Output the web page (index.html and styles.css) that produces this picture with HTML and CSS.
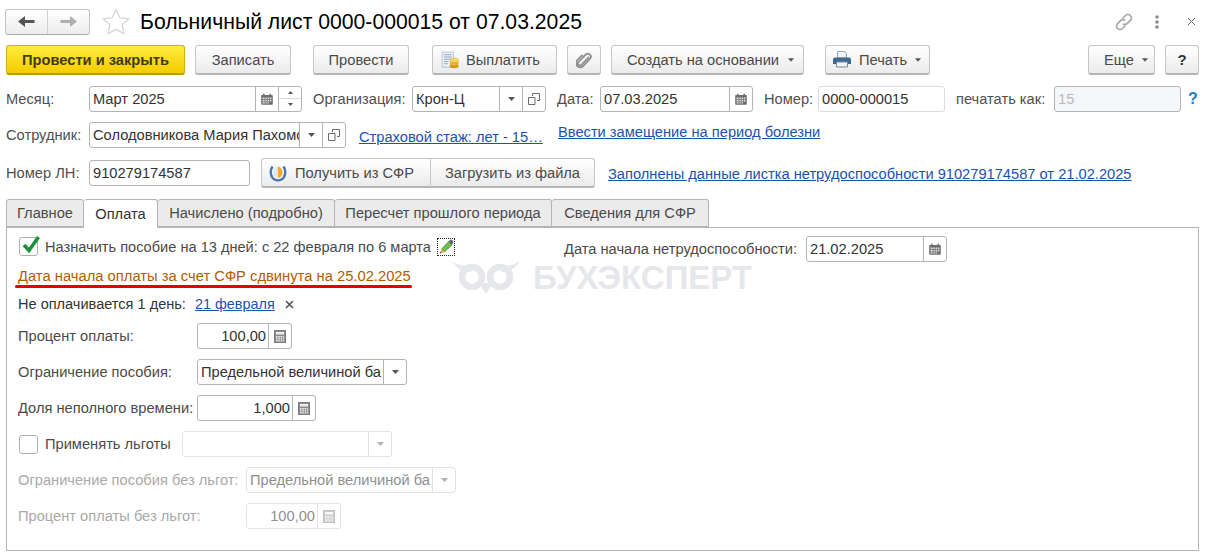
FILE: index.html
```html
<!DOCTYPE html>
<html lang="ru">
<head>
<meta charset="utf-8">
<title>Больничный лист</title>
<link rel="stylesheet" href="styles.css">
</head>
<body>
<svg class="sprite" width="0" height="0" aria-hidden="true">
  <symbol id="cal" viewBox="0 0 12 12"><path fill="#6e6e6e" d="M1 2h1V.8h1.5V2h5V.8H10V2h1a.8.8 0 0 1 .8.8v8.2a.8.8 0 0 1-.8.8H1a.8.8 0 0 1-.8-.8V2.800A.8.8 0 0 1 1 2z"/><path fill="#e4e4e4" d="M1.600 4.600h2v1.600h-2zM4.400 4.600h1.400v1.600H4.400zM6.600 4.600H8v1.600H6.600zM8.800 4.600h1.600v1.600H8.800zM1.600 7h2v1.400h-2zM4.400 7h1.400v1.400H4.400zM6.600 7H8v1.400H6.600zM8.800 7h1.600v1.400H8.800zM1.600 9.200h2v1.400h-2zM4.400 9.200h1.400v1.400H4.400zM6.600 9.200H8v1.400H6.600z"/></symbol>
  <symbol id="calc" viewBox="0 0 12 13"><rect x=".5" y=".5" width="11" height="12" fill="#8c8c8c" stroke="#7a7a7a"/><path fill="#efefef" d="M2 2h8v2.400H2zM2 6h1.600v1.400H2zM4.300 6h1.600v1.400H4.300zM6.600 6h1.600v1.400H6.600zM8.900 6H10v1.400H8.900zM2 8.200h1.600v1.400H2zM4.300 8.200h1.600v1.400H4.300zM6.600 8.200h1.600v1.400H6.600zM8.900 8.200H10v1.400H8.900zM2 10.200h1.600v1.200H2zM4.300 10.200h1.600v1.200H4.300zM6.600 10.200h1.600v1.200H6.600zM8.900 10.200H10v1.200H8.900z"/></symbol>
  <symbol id="copy" viewBox="0 0 12 12"><path fill="none" stroke="#6b6b6b" d="M4.500 3V.5h7v7H9M.5 4.500h6.500v7H.5z"/></symbol>
  <symbol id="tri" viewBox="0 0 7 4"><path fill="#555" d="M0 0h7L3.500 4z"/></symbol>
</svg>
<main class="window">
  <header class="head">
    <div class="nav">
      <span class="nav-btn"><svg width="17" height="13" viewBox="0 0 17 13"><path fill="#555" d="M0 6.500 7 1v4h9.500v3H7v4z"/></svg></span>
      <span class="nav-btn"><svg width="17" height="13" viewBox="0 0 17 13"><path fill="#b0b0b0" d="M17 6.500 10 1v4H.5v3H10v4z"/></svg></span>
    </div>
    <svg class="star" width="28" height="27" viewBox="0 0 28 27"><path fill="#fff" stroke="#d2d4d6" stroke-width="1.200" d="M14 1.500l3.800 8.300 9 1-6.700 6.100 1.900 8.900L14 21.300l-8 4.500 1.900-8.900L1.200 10.800l9-1z"/></svg>
    <h1 class="title">Больничный лист 0000-000015 от 07.03.2025</h1>
    <div class="head-tools">
      <svg width="20" height="20" viewBox="0 0 20 20"><g fill="none" stroke="#a8a8a8" stroke-width="1.700"><path d="M8.500 6.500l3-3a3.400 3.400 0 0 1 4.900 4.900l-3 3a3.400 3.400 0 0 1-4.400.3"/><path d="M11.500 13.500l-3 3a3.400 3.400 0 0 1-4.900-4.900l3-3a3.400 3.400 0 0 1 4.400-.3"/></g></svg>
      <svg class="kebab" width="4" height="14" viewBox="0 0 4 14"><g fill="#8c8c8c"><circle cx="2" cy="2" r="1.800"/><circle cx="2" cy="7" r="1.800"/><circle cx="2" cy="12" r="1.800"/></g></svg>
      <svg class="close" width="9" height="9" viewBox="0 0 9 9"><path stroke="#666" stroke-width="1" d="M1 1l7 7M8 1L1 8"/></svg>
    </div>
  </header>

  <div class="toolbar">
    <button class="btn btn-primary w-post-close">Провести и закрыть</button>
    <button class="btn w-save">Записать</button>
    <button class="btn w-post">Провести</button>
    <button class="btn w-pay">
      <svg width="18" height="18" viewBox="0 0 24 24"><path fill="#eef3f9" stroke="#a4b2c4" d="M1.500 1.500h15v20h-15z"/><path stroke="#8aa4c2" stroke-width="1.300" d="M4 5h10M4 8h10M4 11h10M4 14h6M4 17h5"/><ellipse cx="17.500" cy="20" rx="6" ry="3" fill="#d29a18"/><ellipse cx="17.500" cy="16.500" rx="6" ry="3" fill="#e6b52e"/><ellipse cx="18" cy="12.500" rx="5.500" ry="3" fill="#f7d65e" stroke="#c9981c" stroke-width=".6"/></svg>
      Выплатить</button>
    <button class="btn w-clip" aria-label="Файлы"><svg width="16" height="18" viewBox="0 0 16 18"><path fill="none" stroke="#8f8f8f" stroke-width="1.800" d="M13.500 5.500 6 13.500a2 2 0 0 1-3-2.800L10.500 3a3 3 0 0 1 4.200 4.200L7.500 15a4.200 4.200 0 0 1-6-5.800L7 3.500" transform="translate(-.5 .3)"/></svg></button>
    <button class="btn w-create">Создать на основании<svg class="tri-b tri-near" width="6" height="4"><use href="#tri"/></svg></button>
    <button class="btn w-print">
      <svg width="18" height="17" viewBox="0 0 18 17"><path fill="#f2f5f8" stroke="#9aa4ae" d="M4.500.5h7l2 2.500v4h-9z"/><path fill="#3f6a90" d="M2 6.500h14a2 2 0 0 1 2 2V13h-3v-1.500H3V13H0V8.500a2 2 0 0 1 2-2z"/><path fill="#f2f5f8" stroke="#7a8a99" d="M3.500 11h11v5h-11z"/></svg>
      Печать<svg class="tri-b" width="6" height="4"><use href="#tri"/></svg></button>
    <button class="btn w-more">Еще<svg class="tri-b" width="6" height="4"><use href="#tri"/></svg></button>
    <button class="btn btn-help w-help">?</button>
  </div>

  <div class="row row-1">
    <label class="lbl l-month">Месяц:</label>
    <div class="field f-month"><span class="val">Март 2025</span><span class="addon a-cal"><svg width="12" height="12"><use href="#cal"/></svg></span><span class="spin"><svg width="5" height="3" viewBox="0 0 7 4"><path fill="#555" d="M0 4h7L3.500 0z"/></svg><svg width="5" height="3" viewBox="0 0 7 4"><path fill="#555" d="M0 0h7L3.500 4z"/></svg></span></div>
    <label class="lbl l-org">Организация:</label>
    <div class="field f-org"><span class="val">Крон-Ц</span><span class="addon a-drop"><svg width="7" height="4"><use href="#tri"/></svg></span><span class="addon a-copy"><svg width="12" height="12"><use href="#copy"/></svg></span></div>
    <label class="lbl l-date">Дата:</label>
    <div class="field f-date"><span class="val">07.03.2025</span><span class="addon a-cal"><svg width="12" height="12"><use href="#cal"/></svg></span></div>
    <label class="lbl l-num">Номер:</label>
    <div class="field field-light f-num"><span class="val">0000-000015</span></div>
    <label class="lbl l-print">печатать как:</label>
    <div class="field field-off f-printas"><span class="val">15</span></div>
    <span class="hint">?</span>
  </div>

  <div class="row row-2">
    <label class="lbl l-month">Сотрудник:</label>
    <div class="field f-emp"><span class="val">Солодовникова Мария Пахомовна</span><span class="addon a-drop"><svg width="7" height="4"><use href="#tri"/></svg></span><span class="addon a-copy"><svg width="12" height="12"><use href="#copy"/></svg></span></div>
    <a class="link link-stazh">Страховой стаж: лет - 15…</a>
    <a class="link link-subst">Ввести замещение на период болезни</a>
  </div>

  <div class="row row-3">
    <label class="lbl l-month">Номер ЛН:</label>
    <div class="field f-ln"><span class="val">910279174587</span></div>
    <div class="group">
      <button class="btn g-sfr"><svg width="18" height="18" viewBox="0 0 18 18"><path fill="none" stroke="#4f74ad" stroke-width="2.400" d="M3.500 2.500C.8 6.500 1.200 13 5.500 15.500c2.500 1.300 4.500 1.300 7 0 4.300-2.500 4.700-9 2-13"/><path fill="#dfe5ee" d="M9 2.500C6.500 3 4.500 5.500 4.500 8.500s2 5 4.500 5.500z"/><path fill="#f0a92a" d="M9 2.500c2.500.5 4.500 3 4.500 6s-2 5-4.500 5.500z"/></svg>Получить из СФР</button>
      <button class="btn g-file">Загрузить из файла</button>
    </div>
    <a class="link link-filled">Заполнены данные листка нетрудоспособности 910279174587 от 21.02.2025</a>
  </div>

  <nav class="tabs">
    <span class="tab t-1">Главное</span>
    <span class="tab tab-on t-2">Оплата</span>
    <span class="tab t-3">Начислено (подробно)</span>
    <span class="tab t-4">Пересчет прошлого периода</span>
    <span class="tab t-5">Сведения для СФР</span>
  </nav>

  <section class="panel">
    <div class="watermark">
      <svg width="68" height="33" viewBox="0 0 68 33"><g fill="none" stroke="#e6e7eb" stroke-width="6.500"><circle cx="20" cy="16" r="10"/><circle cx="48" cy="16" r="10"/></g><path fill="#e6e7eb" d="M0 0c6 5 14 5 22 5l-4 6C10 11 4 7 0 0zM68 0c-6 5-14 5-22 5l4 6c8 0 14-4 18-11zM27 22h14l-7 11z"/></svg>
      <span class="wm-text">БУХЭКСПЕРТ</span>
    </div>
    <div class="red-line"></div>

    <div class="p-top">
      <span class="check check-top"><svg class="tick" width="22" height="22" viewBox="0 0 22 22"><path fill="none" stroke="#17913a" stroke-width="3.600" d="M3 10l5 5.500L17.500 2"/></svg></span>
      <span class="txt txt-assign">Назначить пособие на 13 дней: с 22 февраля по 6 марта</span>
      <span class="pencil"><svg width="16" height="16" viewBox="0 0 16 16"><path fill="#6fbf4a" stroke="#3f8a2a" stroke-width=".6" d="M3.500 10 10.500 2.500l3.500 3.500-7.500 7z"/><path fill="#5a6a78" d="M10.500 2.500 12 1a1.500 1.500 0 0 1 2 0l1 1a1.500 1.500 0 0 1 0 2l-1 2z"/><path fill="#eda33a" d="M3.500 10l3 3-4.500 1.500z"/><path fill="#333" d="M2.700 12.800l.9.900-1.600.8z"/></svg></span>
      <span class="txt txt-start">Дата начала нетрудоспособности:</span>
      <div class="field f-start"><span class="val">21.02.2025</span><span class="addon a-cal"><svg width="12" height="12"><use href="#cal"/></svg></span></div>
    </div>

    <p class="warn">Дата начала оплаты за счет СФР сдвинута на 25.02.2025</p>

    <div class="p-unpaid">
      <span class="txt txt-dark">Не оплачивается 1 день:</span>
      <a class="link link-day">21 февраля</a>
      <svg class="x" width="9" height="9" viewBox="0 0 9 9"><path stroke="#555" stroke-width="1.600" d="M1 1l7 7M8 1L1 8"/></svg>
    </div>

    <div class="p-row">
      <label class="plbl w-178">Процент оплаты:</label>
      <div class="field f-pct"><span class="val val-r">100,00</span><span class="addon a-calc"><svg width="12" height="13"><use href="#calc"/></svg></span></div>
    </div>
    <div class="p-row">
      <label class="plbl w-178">Ограничение пособия:</label>
      <div class="field f-limit"><span class="val">Предельной величиной ба</span><span class="addon a-drop"><svg width="7" height="4"><use href="#tri"/></svg></span></div>
    </div>
    <div class="p-row">
      <label class="plbl w-178">Доля неполного времени:</label>
      <div class="field f-share"><span class="val val-r">1,000</span><span class="addon a-calc"><svg width="12" height="13"><use href="#calc"/></svg></span></div>
    </div>
    <div class="p-row">
      <span class="check check-off"></span>
      <label class="plbl w-137">Применять льготы</label>
      <div class="field field-dis f-limit"><span class="val"></span><span class="addon a-drop"><svg class="faint" width="7" height="4"><use href="#tri"/></svg></span></div>
    </div>
    <div class="p-row">
      <label class="plbl plbl-off w-227">Ограничение пособия без льгот:</label>
      <div class="field field-dis f-limit"><span class="val">Предельной величиной ба</span><span class="addon a-drop"><svg class="faint" width="7" height="4"><use href="#tri"/></svg></span></div>
    </div>
    <div class="p-row">
      <label class="plbl plbl-off w-227">Процент оплаты без льгот:</label>
      <div class="field field-dis f-pct"><span class="val val-r">100,00</span><span class="addon a-calc"><svg class="faint" width="12" height="13"><use href="#calc"/></svg></span></div>
    </div>
  </section>
</main>
</body>
</html>
```

FILE: styles.css
```css
* { box-sizing: border-box; }
html, body { margin: 0; padding: 0; background: #fff; }
body { width: 1205px; height: 555px; overflow: hidden; font: 14.67px "Liberation Sans", Arial, sans-serif; color: #4a4a4a; }
.sprite { position: absolute; }
.window { display: flex; flex-direction: column; height: 555px; }

/* header */
.head { display: flex; align-items: center; height: 27px; margin: 8px 0 0 5px; }
.nav { display: flex; width: 85px; height: 26px; border: 1px solid #c4c4c4; border-bottom-color: #aaa; border-radius: 3px; background: linear-gradient(#fff, #ececec); }
.nav-btn { flex: 1; display: flex; align-items: center; justify-content: center; }
.nav-btn + .nav-btn { border-left: 1px solid #d0d0d0; }
.star { margin-left: 12px; }
.title { margin: 0 0 0 10px; font-size: 21.2px; font-weight: 400; color: #000; white-space: nowrap; }
.head-tools { display: flex; align-items: center; margin-left: auto; padding-right: 9px; }
.kebab { margin-left: 21px; }
.close { margin-left: 28px; }

/* buttons */
.btn { display: inline-flex; align-items: center; justify-content: center; height: 30px; padding: 0; border: 1px solid #c6c6c6; border-bottom: 2px solid #b4b4b4; border-radius: 3px; background: linear-gradient(#fff, #ebebeb); font: 14.67px "Liberation Sans", Arial, sans-serif; color: #4a4a4a; white-space: nowrap; }
.toolbar { display: flex; margin: 10px 0 0 6px; height: 30px; }
.btn-primary { background: linear-gradient(#ffec3d, #f5cc00); border-color: #d0ae16; border-bottom-color: #b99b10; font-weight: 700; color: #3f3a1a; }
.w-post-close { width: 179px; }
.w-save { width: 96px; margin-left: 10px; }
.w-post { width: 96px; margin-left: 22px; }
.w-pay { width: 125px; margin-left: 23px; justify-content: flex-start; padding-left: 8px; gap: 7px; }
.w-clip { width: 34px; margin-left: 10px; }
.w-create { width: 193px; margin-left: 10px; justify-content: flex-start; padding-left: 15px; }
.w-print { width: 105px; margin-left: 21px; justify-content: flex-start; padding-left: 7px; gap: 8px; }
.w-more { width: 67px; margin-left: auto; justify-content: flex-start; padding-left: 15px; }
.w-help { width: 34px; margin: 0 6px 0 10px; }
.btn-help { font-weight: 700; font-size: 15px; color: #333; }
.w-print .tri-b { margin-left: 0; }
.tri-b { margin-left: 8px; }
.tri-near { margin-left: 9px; }

/* rows */
.row { display: flex; align-items: center; height: 26px; margin-left: 6px; }
.row-1 { margin-top: 11px; }
.row-2 { margin-top: 10px; }
.row-3 { margin-top: 12px; }
.lbl { white-space: nowrap; color: #4f4f4f; }
.l-month { width: 83px; }
.l-org { width: 99px; margin-left: 11px; }
.l-date { width: 43px; margin-left: 11px; }
.l-num { width: 54px; margin-left: 11px; }
.l-print { width: 98px; margin-left: 11px; }

.field { display: flex; height: 26px; border: 1px solid #b4b4b4; border-radius: 3px; background: #fff; color: #333; overflow: hidden; }
.field-light { border-color: #dcdcdc; }
.field-off { border-color: #b4b4b4; background: #f5f6fa; color: #b9b9b9; }
.field-dis { border-color: #e2e2e2; color: #8f8f8f; }
.val { flex: 1; min-width: 0; padding: 0 3px; line-height: 24px; white-space: nowrap; overflow: hidden; }
.val-r { text-align: right; padding-right: 2px; }
.addon { display: flex; align-items: center; justify-content: center; flex: none; width: 23px; border-left: 1px solid #b4b4b4; }
.field-dis .addon { border-left-color: #e2e2e2; }
.spin { display: flex; flex: none; flex-direction: column; align-items: center; justify-content: space-between; width: 23px; height: 24px; padding: 4px 0 5px; border-left: 1px solid #b4b4b4; background: linear-gradient(transparent 11px, #d8d8d8 11px, #d8d8d8 12px, transparent 12px); }
.faint { opacity: .45; }
.f-month { width: 213px; }
.f-org { width: 134px; }
.f-date { width: 153px; }
.f-num { width: 127px; }
.f-printas { width: 127px; }
.f-emp { width: 257px; }
.f-ln { width: 161px; }
.f-start { width: 141px; margin-left: 6px; }
.hint { margin-left: 7px; font-size: 16px; font-weight: 700; color: #1a7fc4; }

.link { color: #1a52b0; text-decoration: underline; white-space: nowrap; }
.link-stazh { margin: 4px 0 0 13px; width: 183px; }
.link-subst { margin: 0 0 6px 16px; }
.link-filled { margin: 2px 0 0 13px; }
.link-day { width: 79px; font-size: 14.4px; }

.group { display: flex; margin-left: 11px; }
.g-sfr { width: 170px; border-radius: 3px 0 0 3px; justify-content: flex-start; padding-left: 7px; gap: 8px; }
.g-file { width: 165px; border-left: 1px solid #c6c6c6; margin-left: -1px; border-radius: 0 3px 3px 0; }

/* tabs */
.tabs { display: flex; margin: 13px 0 0 6px; height: 28px; position: relative; z-index: 1; }
.tab { display: flex; align-items: center; justify-content: center; height: 28px; border: 1px solid #b4b4b4; border-left-width: 0; border-radius: 3px 3px 0 0; background: #ebebeb; white-space: nowrap; }
.t-1 { border-left-width: 1px; }
.tab-on { height: 29px; background: #fff; border-bottom: 0; color: #333; }
.t-1 { width: 78px; }
.t-2 { width: 74px; }
.t-3 { width: 177px; }
.t-4 { width: 217px; }
.t-5 { width: 157px; }

/* panel */
.panel { position: relative; width: 1193px; height: 324px; margin-left: 6px; padding: 8px 0 0 11px; border: 1px solid #b4b4b4; }
.watermark { position: absolute; left: 445px; top: 33px; display: flex; align-items: center; gap: 13px; }
.wm-text { font-size: 33px; font-weight: 700; color: #e6e7eb; line-height: 33px; white-space: nowrap; }
.red-line { position: absolute; left: 8px; top: 57px; width: 397px; height: 3px; border-radius: 2px; background: #e60000; }

.p-top { position: relative; display: flex; align-items: flex-start; height: 26px; }
.check { position: relative; flex: none; width: 19px; height: 19px; margin-left: 1px; border: 1px solid #b0b0b0; border-radius: 3px; background: #fff; }
.check-top { margin-top: 1px; }
.tick { position: absolute; left: 1px; top: -3px; }
.txt { white-space: nowrap; }
.txt-assign { width: 386px; margin-left: 7px; line-height: 22px; font-size: 14.6px; }
.pencil { display: flex; align-items: center; justify-content: center; width: 18px; height: 18px; margin: 2px 0 0 6px; border: 1px dotted #222; }
.txt-start { width: 236px; margin-left: 109px; line-height: 26px; }
.warn { position: relative; margin: 6px 0 0; height: 16px; line-height: 16px; font-size: 14.75px; color: #b35c00; white-space: nowrap; }
.p-unpaid { display: flex; align-items: center; height: 20px; margin-top: 10px; }
.txt-dark { width: 177px; font-size: 14.55px; color: #333; }
.x { margin-left: 11px; }
.p-row { display: flex; align-items: center; height: 26px; margin-top: 10px; }
.p-unpaid + .p-row { margin-top: 9px; }
.plbl { white-space: nowrap; }
.w-178 { width: 179px; }
.w-137 { width: 137px; margin-left: 7px; }
.w-227 { width: 228px; }
.plbl-off { color: #a9a9a9; }
.f-pct { width: 95px; }
.f-limit { width: 210px; }
.f-share { width: 119px; }
.a-calc { width: 23px; }
```
